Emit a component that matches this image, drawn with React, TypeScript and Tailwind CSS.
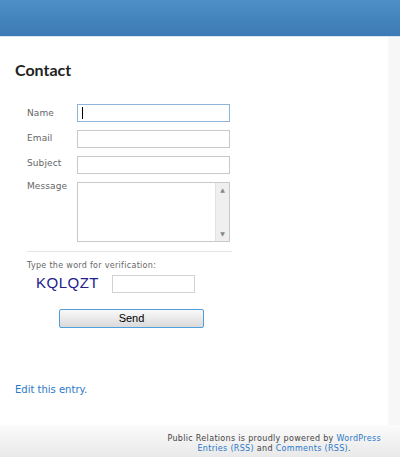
import React from 'react';

const verdana = { fontFamily: '"DejaVu Sans", Verdana, sans-serif' };

function Field({ label, children, labelClass = '' }: { label: string; children: React.ReactNode; labelClass?: string }) {
  return (
    <div className="flex items-start">
      <div className={`w-[50px] text-[9px] leading-[12px] text-[#666] tracking-[0.1px] ${labelClass}`}>{label}</div>
      {children}
    </div>
  );
}

export default function App() {
  return (
    <div className="w-[400px] h-[457px] flex flex-col bg-white overflow-hidden" style={verdana}>
      {/* Header band */}
      <div className="h-[37px] bg-gradient-to-b from-[#4f8fc8] to-[#3b7ab4] border-b border-[#d6e4f1]" />

      <div className="flex flex-1">
        <main className="w-[388px] pl-[15px]">
          <h2
            className="mt-[23px] text-[16px] leading-[20px] font-bold text-[#222]"
            style={{ fontFamily: 'Lato, "Open Sans", sans-serif' }}
          >
            Contact
          </h2>

          {/* Form */}
          <div className="mt-[24px] ml-[12px] w-[205px] flex flex-col gap-[8px]">
            <Field label="Name" labelClass="pt-[3px]">
              <div className="w-[153px] h-[18px] border border-[#8fb4dc] bg-white flex items-center pl-[4px]">
                <div className="w-px h-[12px] bg-black" />
              </div>
            </Field>
            <Field label="Email" labelClass="pt-[2px]">
              <div className="w-[153px] h-[18px] border border-[#c9c9c9] bg-white" />
            </Field>
            <Field label="Subject" labelClass="pt-[1px]">
              <div className="w-[153px] h-[18px] border border-[#c9c9c9] bg-white" />
            </Field>
            <Field label="Message" labelClass="-mt-[2px]">
              <div className="w-[153px] h-[60px] border border-[#c9c9c9] bg-white flex justify-end">
                <div className="w-[14px] h-full bg-[#efefef] border-l border-[#e2e2e2] flex flex-col items-center justify-between py-[4px]">
                  <span className="text-[6px] leading-none text-[#888]">▲</span>
                  <span className="text-[6px] leading-none text-[#888]">▼</span>
                </div>
              </div>
            </Field>
          </div>

          <div className="ml-[12px] mt-[9px] w-[205px] h-px bg-[#e4e4e4]" />

          <div className="ml-[12px] mt-[9px] text-[8px] leading-[10px] text-[#666] tracking-[0.3px]">
            Type the word for verification:
          </div>
          <div className="ml-[21px] mt-[4px] flex items-start">
            <div
              className="w-[76px] text-[15px] leading-[16px] text-[#22208c] tracking-[0.5px]"
              style={{ fontFamily: '"Liberation Sans", Arial, sans-serif' }}
            >
              KQLQZT
            </div>
            <div className="w-[83px] h-[18px] border border-[#d2d2d2] bg-white" />
          </div>

          <button
            className="ml-[44px] mt-[16px] w-[145px] h-[19px] rounded-[2px] border border-[#4fa0da] bg-gradient-to-b from-[#f9f9f9] to-[#dadada] text-[11px] leading-none text-black"
            style={{ fontFamily: '"Liberation Sans", Arial, sans-serif' }}
          >
            Send
          </button>

          <div className="mt-[55px] text-[10px] leading-[12px] text-[#2a78c8]">Edit this entry.</div>
        </main>
        <div className="flex-1 bg-[#f7f7f7]" />
      </div>

      {/* Footer */}
      <footer className="h-[32px] bg-gradient-to-b from-[#fbfbfb] to-[#e9e9e9] flex justify-end pr-[19px] pt-[9px]">
        <div className="text-center text-[8px] leading-[10px] text-[#444] tracking-[0.32px]">
          <div>
            Public Relations is proudly powered by <span className="text-[#2a78c8]">WordPress</span>
          </div>
          <div>
            <span className="text-[#2a78c8]">Entries (RSS)</span> and{' '}
            <span className="text-[#2a78c8]">Comments (RSS)</span>.
          </div>
        </div>
      </footer>
    </div>
  );
}
